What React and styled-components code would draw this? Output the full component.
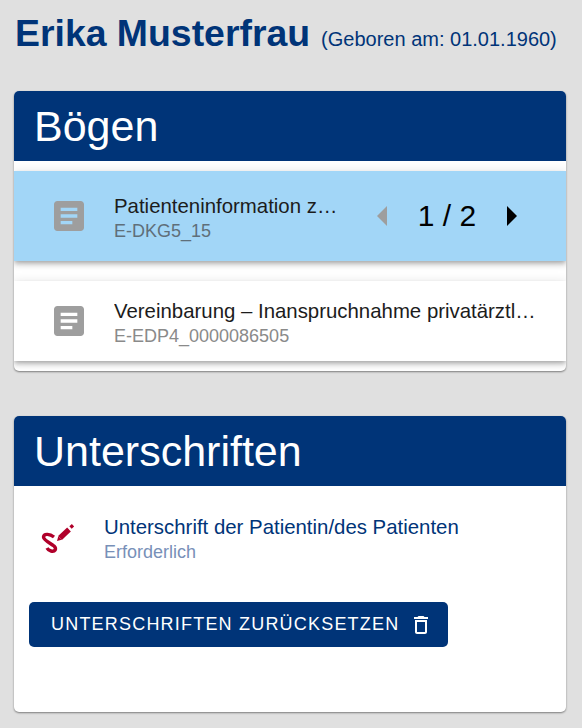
import React from "react";
import styled, { createGlobalStyle } from "styled-components";
import { MdArticle, MdArrowLeft, MdArrowRight, MdDeleteOutline } from "react-icons/md";

const navy = "#003478";

const GlobalStyle = createGlobalStyle`
  * {
    box-sizing: border-box;
  }
  body {
    margin: 0;
    background-color: #e0e0e0;
    font-family: "Liberation Sans", Arial, sans-serif;
  }
`;

const Page = styled.div`
  display: flex;
  flex-direction: column;
  width: 582px;
  height: 728px;
  overflow: hidden;
  padding: 14px 16px 16px 14px;
`;

const PatientHeader = styled.header`
  display: flex;
  align-items: baseline;
  height: 77px;
  padding-left: 1px;
  color: ${navy};
`;

const Name = styled.h1`
  margin: 0;
  font-size: 37.4px;
  line-height: 38px;
  font-weight: 700;
`;

const Born = styled.span`
  margin-left: 11px;
  font-size: 20px;
`;

const Card = styled.section`
  background: #ffffff;
  border-radius: 5px;
  overflow: hidden;
  height: ${(p) => p.$height}px;
  margin-bottom: ${(p) => p.$gap || 0}px;
  box-shadow: 0 1px 2px rgba(0, 0, 0, 0.45);
`;

const CardTitle = styled.h2`
  margin: 0;
  height: 70px;
  padding-left: 20px;
  background: ${navy};
  color: #ffffff;
  font-size: 43px;
  line-height: 70px;
  font-weight: 400;
`;

const List = styled.div`
  display: flex;
  flex-direction: column;
  gap: 20px;
  padding-top: 10px;
`;

const Row = styled.div`
  display: flex;
  align-items: center;
  height: ${(p) => (p.$active ? 90 : 80)}px;
  padding-left: 35px;
  background: ${(p) => (p.$active ? "#a2d6f7" : "#ffffff")};
  box-shadow: 0 2px 4px -1px rgba(0, 0, 0, 0.2), 0 4px 5px rgba(0, 0, 0, 0.14),
    0 1px 10px rgba(0, 0, 0, 0.12);
`;

const DocIcon = styled(MdArticle)`
  flex: none;
  width: 40px;
  height: 40px;
  color: #9e9e9e;
`;

const RowText = styled.div`
  flex: 1;
  min-width: 0;
  margin-left: 25px;
  margin-right: ${(p) => (p.$active ? 19 : 30)}px;
  padding-top: 4px;
`;

const RowTitle = styled.div`
  font-size: 20.4px;
  line-height: 26px;
  color: #1c1c1c;
  white-space: nowrap;
  overflow: hidden;
  text-overflow: ellipsis;
`;

const RowCode = styled.div`
  font-size: 18px;
  line-height: 24px;
  color: ${(p) => (p.$active ? "#5f6f7a" : "#8a8a8a")};
`;

const Pager = styled.div`
  flex: none;
  display: flex;
  align-items: center;
  margin-right: 31px;
  font-size: 30px;
  color: #000000;
`;

const PagerCount = styled.span`
  width: 80px;
  text-align: center;
  white-space: nowrap;
`;

const Arrow = styled.span`
  display: flex;
  color: ${(p) => (p.$disabled ? "#9e9e9e" : "#000000")};

  svg {
    width: 48px;
    height: 48px;
  }
`;

const SignatureBlock = styled.div`
  display: flex;
  flex-direction: column;
  padding: 29px 15px 0;
`;

const SignatureRow = styled.div`
  display: flex;
  align-items: center;
`;

const SignatureIcon = styled.svg`
  flex: none;
  width: 40px;
  height: 40px;
  margin: 2px 0 0 10px;
`;

const SignatureText = styled.div`
  margin-left: 25px;
`;

const SignatureTitle = styled.div`
  font-size: 20.4px;
  line-height: 25px;
  color: ${navy};
`;

const SignatureHint = styled.div`
  font-size: 18px;
  line-height: 24px;
  color: #7890b8;
`;

const ResetButton = styled.button`
  display: flex;
  align-items: center;
  align-self: flex-start;
  gap: 10px;
  height: 45px;
  margin-top: 38px;
  padding: 0 15px 0 22px;
  border: 0;
  border-radius: 5px;
  background: ${navy};
  color: #ffffff;
  font-family: inherit;
  font-size: 18px;
  letter-spacing: 1.2px;
  white-space: nowrap;
  text-transform: uppercase;

  svg {
    width: 24px;
    height: 24px;
  }
`;

const DocRow = ({ title, code, active, children }) => (
  <Row $active={active}>
    <DocIcon />
    <RowText $active={active}>
      <RowTitle>{title}</RowTitle>
      <RowCode $active={active}>{code}</RowCode>
    </RowText>
    {children}
  </Row>
);

const App = () => {
  return (
    <Page>
      <GlobalStyle />
      <PatientHeader>
        <Name>Erika Musterfrau</Name>
        <Born>(Geboren am: 01.01.1960)</Born>
      </PatientHeader>

      <Card $height={280} $gap={45}>
        <CardTitle>Bögen</CardTitle>
        <List>
          <DocRow active title="Patienteninformation zur Einwilligung" code="E-DKG5_15">
            <Pager>
              <Arrow $disabled>
                <MdArrowLeft />
              </Arrow>
              <PagerCount>1 / 2</PagerCount>
              <Arrow>
                <MdArrowRight />
              </Arrow>
            </Pager>
          </DocRow>
          <DocRow
            title="Vereinbarung – Inanspruchnahme privatärztlicher Leistungen"
            code="E-EDP4_0000086505"
          />
        </List>
      </Card>

      <Card $height={296}>
        <CardTitle>Unterschriften</CardTitle>
        <SignatureBlock>
          <SignatureRow>
            <SignatureIcon viewBox="0 0 40 40" fill="none" stroke="#b0002a">
              <path d="M21 17 L30 8.5" strokeWidth="5.4" />
              <path d="M18 20 L19.3 15.2 L22.7 18.8 Z" fill="#b0002a" stroke="none" />
              <path d="M31.5 6.5 L34 4.2" strokeWidth="3.4" />
              <path
                d="M15 16 C11 13 5 12 4.5 16 C4.5 19 11 22 15 25 C18 28 16 31 12 30 C10 29.5 9 29 8 27"
                strokeWidth="3.4"
              />
            </SignatureIcon>
            <SignatureText>
              <SignatureTitle>Unterschrift der Patientin/des Patienten</SignatureTitle>
              <SignatureHint>Erforderlich</SignatureHint>
            </SignatureText>
          </SignatureRow>
          <ResetButton>
            Unterschriften zurücksetzen
            <MdDeleteOutline />
          </ResetButton>
        </SignatureBlock>
      </Card>
    </Page>
  );
};

export default App;
